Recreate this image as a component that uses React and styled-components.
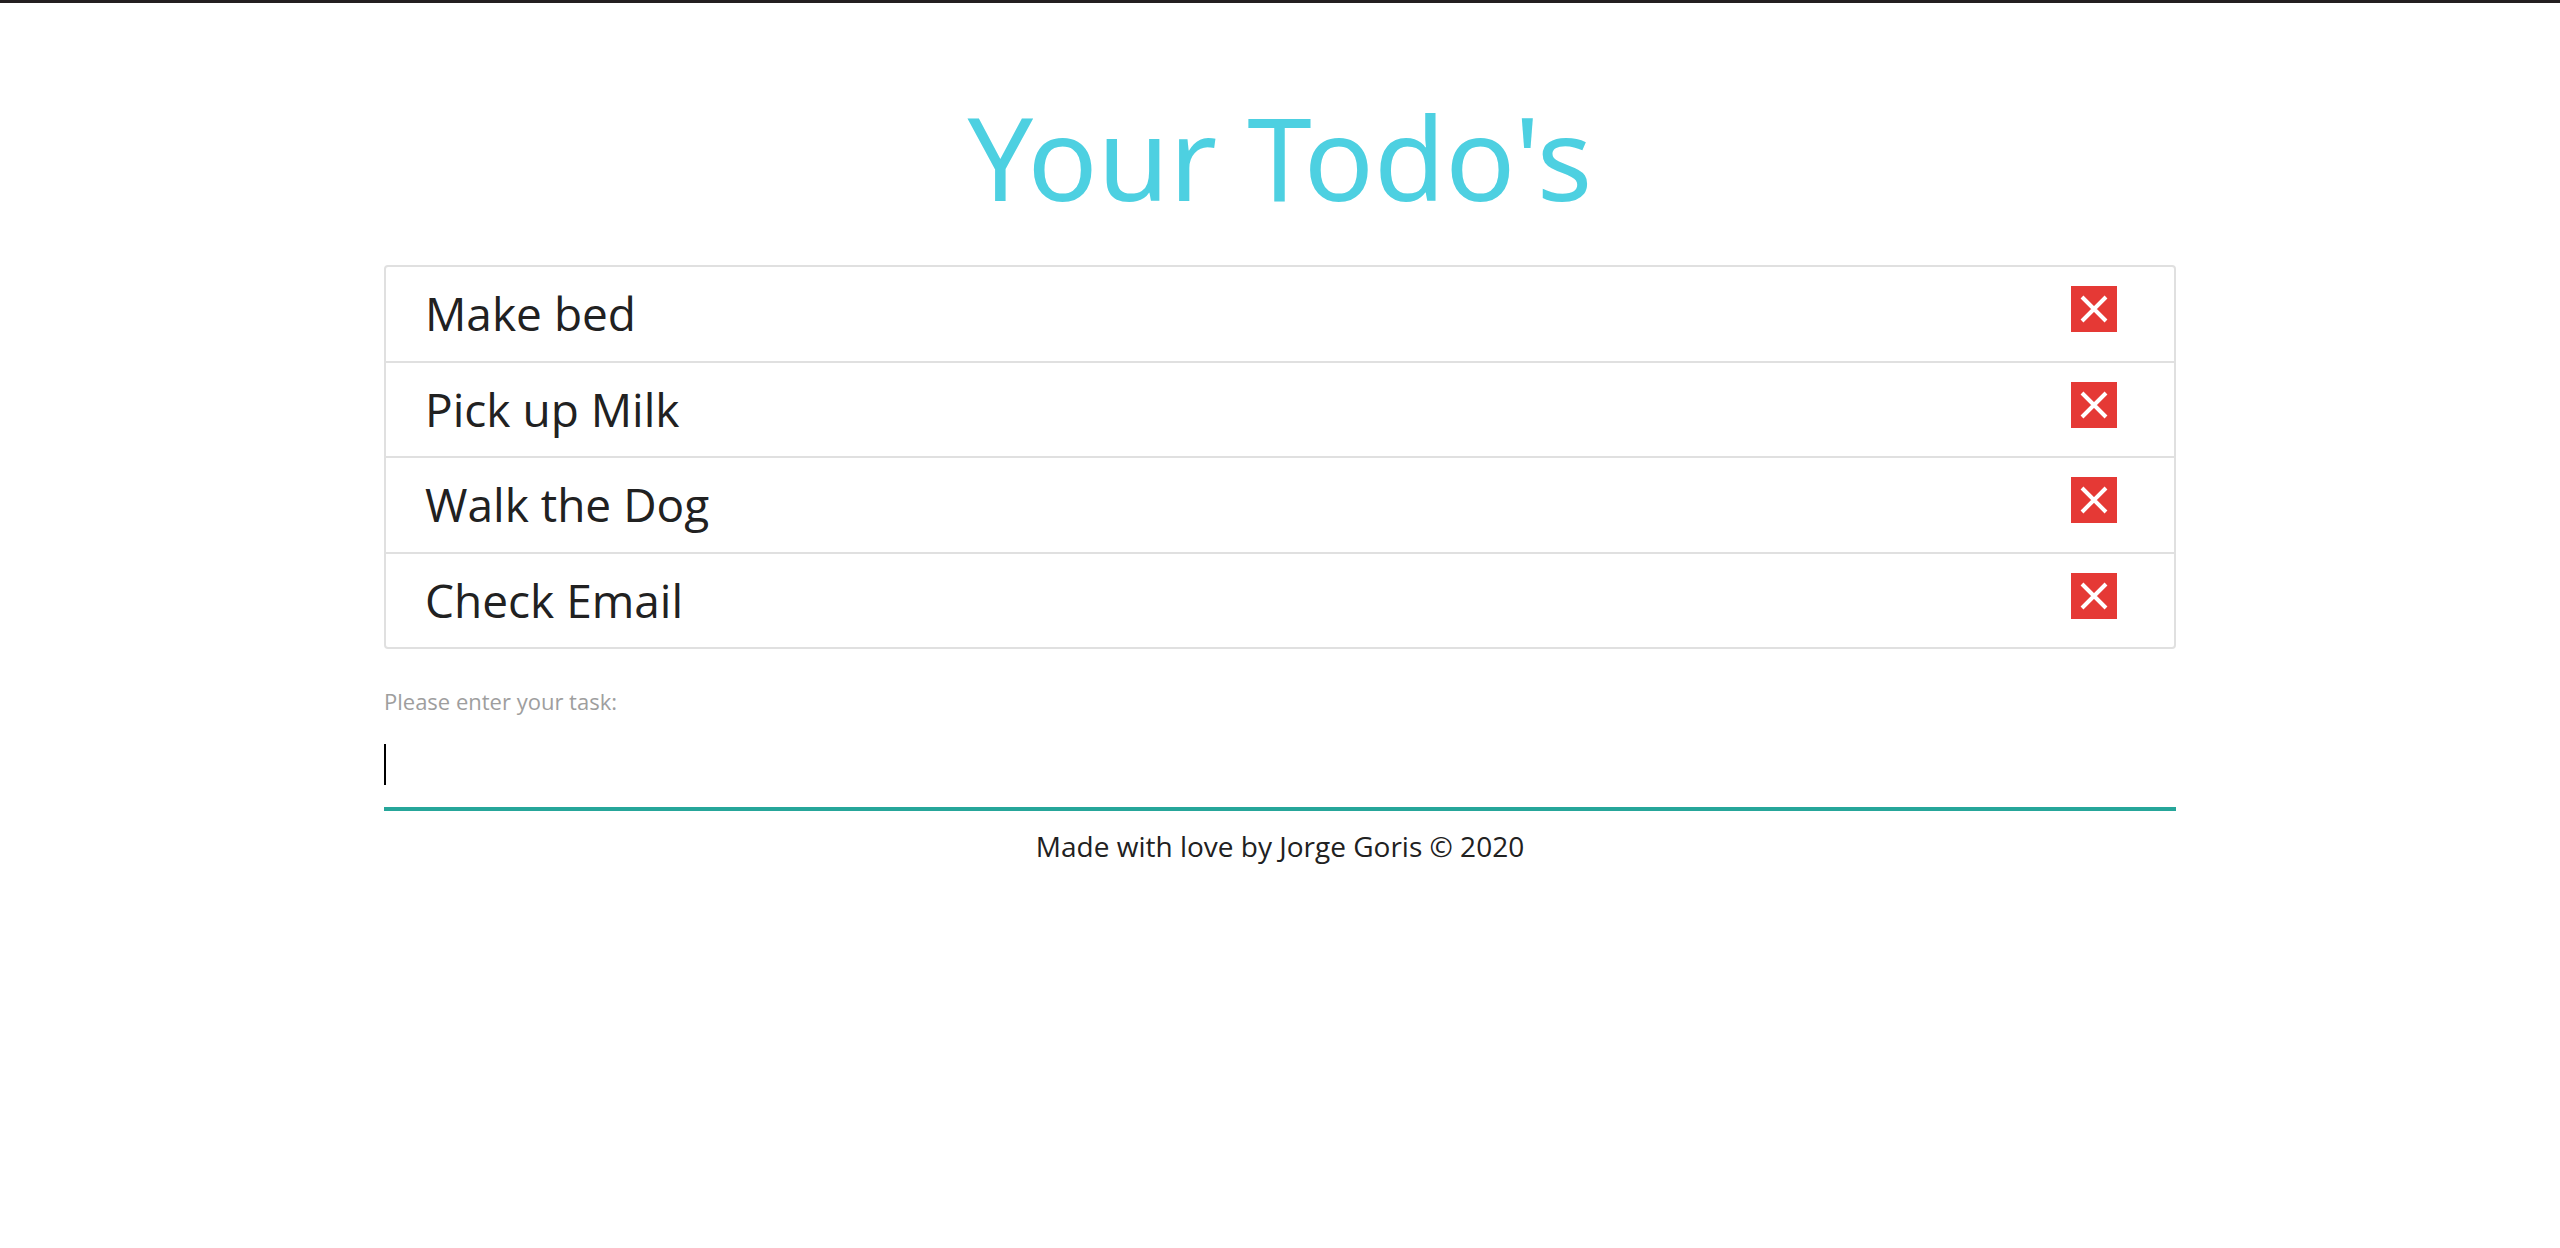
import React, { useState } from "react";
import styled, { createGlobalStyle } from "styled-components";

const GlobalStyle = createGlobalStyle`
  *, *::before, *::after { box-sizing: border-box; }
  body {
    margin: 0;
    background: #ffffff;
    color: #212121;
    font-family: "Segoe UI", "Open Sans", "Noto Sans", sans-serif;
    font-size: 28px;
  }
`;

const Page = styled.div`
  border-top: 3px solid #231f20;
`;

const Container = styled.main`
  width: 70%;
  margin: 0 auto;
`;

const Title = styled.h1`
  margin: 0;
  padding: 88px 0 44px;
  color: #4dd0e1;
  font-family: "Segoe UI", "Noto Sans", sans-serif;
  font-size: 116px;
  font-weight: 400;
  font-kerning: normal;
  line-height: 130px;
  text-align: center;
`;

const List = styled.ul`
  display: grid;
  grid-auto-rows: 94px 95px 96px 95px;
  margin: 0;
  padding: 0;
  list-style: none;
  background: #ffffff;
  border: 2px solid #e0e0e0;
  border-radius: 4px;
`;

const Item = styled.li`
  display: flex;
  align-items: flex-start;
  justify-content: space-between;
  padding: 16px 57px 0 39px;

  & + & {
    border-top: 2px solid #e0e0e0;
  }
`;

const Task = styled.span`
  font-size: 46px;
  line-height: 60px;
`;

const DeleteButton = styled.button`
  display: flex;
  align-items: center;
  justify-content: center;
  width: 46px;
  height: 46px;
  margin-top: 3px;
  padding: 0;
  border: 0;
  background: #e53935;
  cursor: pointer;
`;

const Form = styled.form`
  display: flex;
  flex-direction: column;
  padding-top: 36px;
`;

const Label = styled.label`
  color: #9e9e9e;
  font-size: 22px;
  line-height: 32px;
`;

const Field = styled.div`
  position: relative;
  display: flex;
  border-bottom: 4px solid #26a69a;
`;

const Input = styled.input`
  width: 100%;
  height: 90px;
  padding: 0;
  border: 0;
  outline: 0;
  background: transparent;
  color: #000000;
  caret-color: transparent;
  font: inherit;

  &:not(:placeholder-shown) {
    caret-color: #000000;
  }
`;

const Caret = styled.span`
  position: absolute;
  left: 0;
  top: 27px;
  width: 2px;
  height: 41px;
  background: #000000;
  pointer-events: none;

  ${Input}:not(:placeholder-shown) + & {
    display: none;
  }
`;

const Footer = styled.footer`
  padding: 14px 0;
  font-size: 28px;
  line-height: 42px;
  text-align: center;
`;

const CrossIcon = () => (
  <svg width="28" height="28" viewBox="0 0 28 28" aria-hidden="true">
    <path d="M2 2 26 26M26 2 2 26" fill="none" stroke="#ffffff" strokeWidth="4" />
  </svg>
);

export default function App() {
  const [todos, setTodos] = useState(["Make bed", "Pick up Milk", "Walk the Dog", "Check Email"]);
  const [draft, setDraft] = useState("");

  const addTodo = (event) => {
    event.preventDefault();
    if (!draft.trim()) return;
    setTodos([...todos, draft.trim()]);
    setDraft("");
  };

  return (
    <Page>
      <GlobalStyle />
      <Container>
        <Title>Your Todo's</Title>
        <List>
          {todos.map((todo, index) => (
            <Item key={index}>
              <Task>{todo}</Task>
              <DeleteButton
                type="button"
                aria-label={`Delete ${todo}`}
                onClick={() => setTodos(todos.filter((_, i) => i !== index))}
              >
                <CrossIcon />
              </DeleteButton>
            </Item>
          ))}
        </List>
        <Form onSubmit={addTodo}>
          <Label htmlFor="task">Please enter your task:</Label>
          <Field>
            <Input
              id="task"
              type="text"
              placeholder=" "
              autoComplete="off"
              value={draft}
              onChange={(event) => setDraft(event.target.value)}
            />
            <Caret />
          </Field>
        </Form>
      </Container>
      <Footer>Made with love by Jorge Goris © 2020</Footer>
    </Page>
  );
}
